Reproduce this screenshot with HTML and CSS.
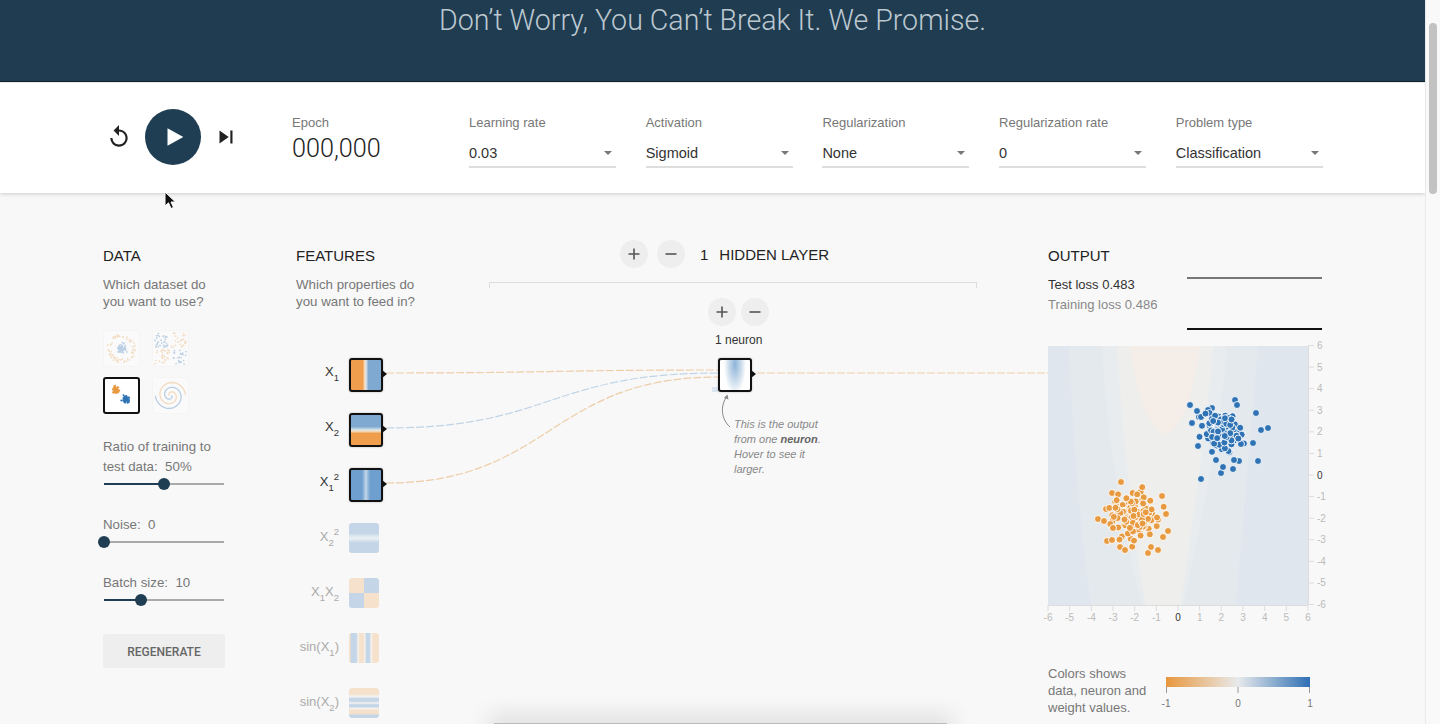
FILE: index.html
```html
<!DOCTYPE html>
<html lang="en">
<head>
<meta charset="utf-8">
<title>Neural Network Playground</title>
<link rel="stylesheet" href="styles.css">
</head>
<body>
<div class="window">
  <div class="page">
    <header class="hero"><h1>Don’t Worry, You Can’t Break It. We Promise.</h1></header>

    <section class="topbar">
      <div class="transport">
        <svg class="icon-btn" viewBox="0 0 24 24"><path d="M12 5V1L7 6l5 5V7c3.31 0 6 2.69 6 6s-2.69 6-6 6-6-2.69-6-6H4c0 4.42 3.58 8 8 8s8-3.58 8-8-3.58-8-8-8z"/></svg>
        <div class="play"><svg viewBox="0 0 24 24"><path d="M3 1.5 L22 12 L3 22.5 Z"/></svg></div>
        <svg class="icon-btn" viewBox="0 0 24 24"><path d="M6 18l8.5-6L6 6v12zM16 6v12h2V6h-2z"/></svg>
      </div>
      <div class="epoch">
        <div class="ctl-label">Epoch</div>
        <div class="epoch-value">000,000</div>
      </div>
      <div class="selects">
        <div class="select"><div class="ctl-label">Learning rate</div><div class="ctl-value"><span>0.03</span><i class="caret"></i></div></div>
        <div class="select"><div class="ctl-label">Activation</div><div class="ctl-value"><span>Sigmoid</span><i class="caret"></i></div></div>
        <div class="select"><div class="ctl-label">Regularization</div><div class="ctl-value"><span>None</span><i class="caret"></i></div></div>
        <div class="select"><div class="ctl-label">Regularization rate</div><div class="ctl-value"><span>0</span><i class="caret"></i></div></div>
        <div class="select"><div class="ctl-label">Problem type</div><div class="ctl-value"><span>Classification</span><i class="caret"></i></div></div>
      </div>
    </section>

    <main class="main">
      <svg class="links" viewBox="0 193 1425 531">
        <path class="link orange" d="M386 373 C 550 373, 550 370, 718 370"/>
        <path class="link blue" d="M386 428 C 550 428, 550 373, 718 373"/>
        <path class="link orange" d="M386 483 C 550 483, 550 377, 718 377"/>
        <path class="link orange" d="M757 373 H 1048"/>
      </svg>

      <section class="col col-data">
        <h4>DATA</h4>
        <p class="desc">Which dataset do<br>you want to use?</p>
        <div class="datasets">
          <div class="dataset"><svg id="ds-circle" viewBox="0 0 37 37"></svg></div>
          <div class="dataset"><svg id="ds-xor" viewBox="0 0 37 37"></svg></div>
          <div class="dataset selected"><svg id="ds-gauss" viewBox="0 0 37 37"></svg></div>
          <div class="dataset"><svg id="ds-spiral" viewBox="0 0 37 37"></svg></div>
        </div>
        <div class="slider-label first">Ratio of training to<br>test data:&nbsp; 50%</div>
        <div class="slider"><div class="fill" style="width:50%"></div><div class="knob" style="left:50%"></div></div>
        <div class="slider-label">Noise:&nbsp; 0</div>
        <div class="slider"><div class="fill" style="width:0"></div><div class="knob" style="left:0"></div></div>
        <div class="slider-label">Batch size:&nbsp; 10</div>
        <div class="slider"><div class="fill" style="width:31%"></div><div class="knob" style="left:31%"></div></div>
        <button class="regen">REGENERATE</button>
      </section>

      <section class="col col-features">
        <h4>FEATURES</h4>
        <p class="desc">Which properties do<br>you want to feed in?</p>
        <div class="features">
          <div class="feature on"><span class="f-label">X<sub>1</sub></span><div class="thumb t-x1"></div></div>
          <div class="feature on"><span class="f-label">X<sub>2</sub></span><div class="thumb t-x2"></div></div>
          <div class="feature on"><span class="f-label">X<sub>1</sub><sup>2</sup></span><div class="thumb t-x1sq"></div></div>
          <div class="feature"><span class="f-label">X<sub>2</sub><sup>2</sup></span><div class="thumb t-x2sq"></div></div>
          <div class="feature"><span class="f-label">X<sub>1</sub>X<sub>2</sub></span><div class="thumb t-x1x2"></div></div>
          <div class="feature"><span class="f-label">sin(X<sub>1</sub>)</span><div class="thumb t-sin1"></div></div>
          <div class="feature"><span class="f-label">sin(X<sub>2</sub>)</span><div class="thumb t-sin2"></div></div>
        </div>
      </section>

      <section class="col col-network">
        <div class="net-head">
          <button class="round"><svg viewBox="0 0 14 14"><path d="M7 1.500V12.500M1.500 7H12.500"/></svg></button>
          <button class="round"><svg viewBox="0 0 14 14"><path d="M1.500 7H12.500"/></svg></button>
          <span class="net-count">1</span>
          <span class="net-title">HIDDEN LAYER</span>
        </div>
        <div class="bracket"></div>
        <div class="layer-btns">
          <button class="round"><svg viewBox="0 0 14 14"><path d="M7 1.500V12.500M1.500 7H12.500"/></svg></button>
          <button class="round"><svg viewBox="0 0 14 14"><path d="M1.500 7H12.500"/></svg></button>
        </div>
        <div class="neuron-count">1 neuron</div>
        <div class="neuron">
          <i class="weight-mark"></i>
          <div class="neuron-box"></div>
          <div class="callout">
            <svg class="callout-arrow" viewBox="0 0 16 34"><path d="M12 33 C 3 25, 2 12, 9 2"/><path class="tip" d="M9.500 0.500 L10.500 5.500 L6 3.800 Z"/></svg>
            <p>This is the output<br>from one <b>neuron</b>.<br>Hover to see it<br>larger.</p>
          </div>
        </div>
      </section>

      <section class="col col-output">
        <h4>OUTPUT</h4>
        <div class="loss-row">
          <div class="loss">
            <div class="loss-test">Test loss 0.483</div>
            <div class="loss-train">Training loss 0.486</div>
          </div>
          <div class="spark"></div>
        </div>
        <svg id="heatmap" class="heatmap" viewBox="1048 346 290 290">
          <rect x="1048" y="346" width="260" height="259" fill="#dfe6ee"/>
          <path fill="#e4e9ee" d="M1069 346 C1072 420 1080 530 1091 605 H1236 C1242 530 1252 420 1258 346 Z"/>
          <path fill="#e9ecef" d="M1102 346 C1106 420 1120 530 1143 605 H1183 C1200 530 1222 420 1227 346 Z"/>
          <path fill="#eeeeed" d="M1117 346 C1122 420 1132 530 1146 605 H1181 C1192 520 1208 420 1213 346 Z"/>
          <path fill="#f4ede8" d="M1130 346 C1134 385 1145 425 1165 436 C1185 425 1196 385 1200 346 Z"/>
          <g id="hm-dots"></g>
          <g id="hm-axes"></g>
        </svg>
        <div class="legend">
          <div class="legend-text">Colors shows<br>data, neuron and<br>weight values.</div>
          <svg class="legend-bar" viewBox="0 0 150 42">
            <defs><linearGradient id="lg"><stop offset="0" stop-color="#e8973d"/><stop offset=".5" stop-color="#e8eaeb"/><stop offset="1" stop-color="#2e6fb4"/></linearGradient></defs>
            <rect x="2" y="0" width="144" height="10" fill="url(#lg)"/>
            <path class="legend-tick" d="M2.500 10v6M74 10v6M145.500 10v6"/>
            <text x="2" y="30">-1</text><text x="74" y="30">0</text><text x="146" y="30">1</text>
          </svg>
        </div>
      </section>

      <svg class="cursor" viewBox="0 0 14 20"><path d="M1 1 L1 15 L4.500 11.800 L7 17.500 L9.500 16.400 L7 11 L11.500 11 Z"/></svg>
    </main>
    <div class="next-card"></div>
  </div>
  <div class="scrollbar"><div class="scroll-thumb"></div></div>
</div>
<script src="script.js"></script>
</body>
</html>
```

FILE: styles.css
```css
* { box-sizing: border-box; }
html, body { margin: 0; height: 100%; overflow: hidden; }
body { font-family: "Liberation Sans", Arial, sans-serif; color: #333; background: #f8f8f8; }
.window { display: flex; width: 1440px; height: 724px; overflow: hidden; }
.page { width: 1425px; height: 724px; overflow: hidden; display: flex; flex-direction: column; flex: none; }
.scrollbar { flex: 1; background: #f9f9f9; border-left: 1px solid #e9e9e9; padding: 23px 3px 0 3px; }
.scroll-thumb { width: 8px; height: 171px; background: #c2c2c2; border-radius: 4px; }

.hero { height: 82px; flex: none; background: #1f3c50; border-bottom: 1px solid #14252f; text-align: center; }
.hero h1 { margin: 0; padding-top: 1px; font: 300 28.600px/38px Roboto, sans-serif; color: #bcc8d0; }

.topbar { height: 111px; flex: none; background: #fff; display: flex; box-shadow: 0 1px 4px rgba(0,0,0,.18); position: relative; z-index: 2; border-top: 1px solid #e4e7e9; }
.transport { display: flex; align-items: center; gap: 12px; padding: 0 0 0 106px; height: 107px; width: 292px; }
.icon-btn { width: 26px; height: 26px; fill: #222; flex: none; }
.icon-btn:first-child { margin-right: 1px; }
.play { width: 56px; height: 56px; border-radius: 50%; background: #1f3e53; flex: none; display: flex; align-items: center; justify-content: center; padding-left: 3px; }
.play svg { width: 20px; height: 22px; fill: #fff; }
.epoch { width: 177px; flex: none; }
.ctl-label { font-size: 13px; line-height: 16px; color: #777; margin-top: 32px; }
.epoch-value { font: 300 25.200px/30px Roboto, sans-serif; color: #222; margin-top: 3px; }
.selects { display: flex; gap: 29.700px; }
.select { width: 147px; }
.ctl-value { display: flex; align-items: center; justify-content: space-between; height: 32px; margin-top: 5px; padding: 3px 4px 0 0; border-bottom: 2px solid #ddd; font-size: 14.500px; color: #333; }
.caret { width: 0; height: 0; border-left: 4.500px solid transparent; border-right: 4.500px solid transparent; border-top: 4.500px solid #777; }

.main { position: relative; height: 530px; flex: none; padding: 47px 0 0 103px; display: grid; grid-template-columns: 193px 193px 488px 277px; column-gap: 0; align-items: start; background: #f8f8f8; }
.col h4 { margin: 8px 0 0; font-size: 15px; line-height: 16px; font-weight: 400; color: #222; }
.desc { margin: 12px 0 0; font-size: 13.300px; line-height: 17px; color: #777; }
.col-output { margin-left: 71px; }

.datasets { display: grid; grid-template-columns: 37px 37px; gap: 10px 12px; margin-top: 20px; }
.dataset { width: 37px; height: 37px; border-radius: 3px; border: 1px solid #f0f0f0; opacity: .3; background: #fff; overflow: hidden; }
.dataset svg { display: block; width: 100%; height: 100%; }
.dataset.selected { opacity: 1; border: 2.500px solid #111; }
.slider-label { margin: 22px 0 -1px; padding-top: 1px; font-size: 13.300px; line-height: 20px; color: #777; }
.slider { position: relative; width: 120px; height: 16px; margin-left: 1px; background: linear-gradient(#aaa,#aaa) center/100% 2px no-repeat; }
.fill { position: absolute; left: 0; top: 7px; height: 2px; background: #1f3e53; }
.knob { position: absolute; top: 2px; width: 12px; height: 12px; margin-left: -6px; border-radius: 50%; background: #1f3e53; }
.regen { display: block; width: 122px; height: 34px; margin-top: 26px; padding: 1px 0 0; border: 0; border-radius: 2px; background: #eee; font: 500 12px Roboto, sans-serif; color: #666; }

.features { margin-top: 48px; }
.feature { display: flex; height: 55px; gap: 10px; align-items: flex-start; color: #aaa; }
.feature.on { color: #333; }
.f-label { width: 43px; margin-top: 4px; text-align: right; font-size: 13px; line-height: 20px; white-space: nowrap; display: flex; justify-content: flex-end; flex: none; }
.f-label sub { font-size: 9.500px; line-height: 1; align-self: flex-end; }
.f-label sup { font-size: 9.500px; line-height: 1; align-self: flex-start; }
.thumb { width: 30px; height: 30px; border-radius: 3px; opacity: .42; position: relative; flex: none; }
.feature.on .thumb { width: 34px; height: 34px; opacity: 1; border: 2px solid #111; box-shadow: 0 0 2px rgba(0,0,0,.3); background-origin: border-box; }
.feature.on .thumb::after, .neuron-box::after { content: ""; position: absolute; right: -6px; top: 10px; border-left: 5px solid #111; border-top: 4.500px solid transparent; border-bottom: 4.500px solid transparent; }
.t-x1 { background: linear-gradient(90deg, #ee9e4c 0 40%, #f5d9b8 46%, #dfe6ea 50%, #80a9d2 57%); }
.t-x2 { background: linear-gradient(180deg, #80a9d2 0 40%, #dfe6ea 50%, #f5d9b8 54%, #ee9e4c 60%); }
.t-x1sq { background: linear-gradient(90deg, #6f9fce 0 38%, #9dbedd 45%, #c5d8e8 50%, #9dbedd 55%, #6f9fce 62%); }
.t-x2sq { background: linear-gradient(180deg, #7ca6d0 0 34%, #bcd2e6 44%, #d8e4ee 50%, #bcd2e6 56%, #7ca6d0 66%); }
.t-x1x2 { background: conic-gradient(#7ca6d0 0 25%, #f2c28f 25% 50%, #7ca6d0 50% 75%, #f2c28f 75%); }
.t-sin1 { background: linear-gradient(90deg, #f2c28f 0 3%, #7ca6d0 8% 24%, #f0ece5 30%, #f2c28f 36% 48%, #f0ece5 53%, #7ca6d0 58% 68%, #f0ece5 74%, #f2c28f 80%); }
.t-sin2 { background: linear-gradient(180deg, #f2c28f 0 20%, #f0ece5 28%, #7ca6d0 36% 44%, #f0ece5 50%, #7ca6d0 56% 62%, #f0ece5 68%, #f2c28f 74% 84%, #7ca6d0 92%); }

.net-head { display: flex; align-items: center; gap: 9px; padding-left: 131px; height: 28px; }
.round { width: 28px; height: 28px; padding: 0; border: 0; border-radius: 50%; background: #eee; display: flex; align-items: center; justify-content: center; }
.round svg { width: 14px; height: 14px; fill: none; stroke: #555; stroke-width: 1.600; }
.net-count { margin: 0 0 0 6px; font-size: 15px; color: #222; }
.net-title { margin: 0 0 0 2px; font-size: 15px; color: #222; }
.bracket { height: 6px; margin-top: 14px; border: 1.500px solid #ddd; border-bottom: 0; }
.layer-btns { display: flex; gap: 5px; margin: 10px 0 0 219px; }
.neuron-count { margin: 7px 0 0 226px; font-size: 12px; line-height: 14px; color: #333; }
.neuron { position: relative; margin: 11px 0 0 229px; width: 34px; }
.neuron-box { position: relative; width: 34px; height: 34px; border: 2px solid #111; border-radius: 3px; box-shadow: 0 0 2px rgba(0,0,0,.3); background: radial-gradient(ellipse 11px 30px at 50% 15%, #8db4da 0, #b9d0e6 40%, #e4edf4 78%, #fff 100%), #fff; }
.weight-mark { position: absolute; left: -6px; top: 29px; width: 6px; height: 5px; background: #dde6f0; }
.callout { position: absolute; left: 0; top: 36px; width: 110px; }
.callout-arrow { position: absolute; left: 0; top: 0; width: 16px; height: 34px; fill: none; stroke: #888; stroke-width: 1; }
.callout-arrow .tip { fill: #888; stroke: none; }
.callout p { margin: 23px 0 0 16px; font-size: 11px; line-height: 15px; font-style: italic; color: #888; }
.callout b { color: #666; }

.loss-row { display: flex; justify-content: space-between; width: 274px; margin-top: 11px; align-items: flex-start; }
.loss { font-size: 13px; line-height: 20px; }
.loss-test { color: #333; }
.loss-train { color: #888; }
.spark { width: 135px; height: 53px; margin-top: 2px; border-top: 2px solid #777; border-bottom: 2px solid #111; }
.heatmap { display: block; width: 290px; height: 290px; margin-top: 16px; overflow: visible; }
.axis-line { stroke: #ddd; stroke-width: 1; fill: none; }
.axis-text { font: 10px "Liberation Sans", sans-serif; fill: #bbb; }
.axis-text.zero { fill: #333; }
.legend { display: flex; margin-top: 29px; }
.legend-text { width: 116px; font-size: 13px; line-height: 17px; color: #777; flex: none; }
.legend-bar { width: 150px; height: 42px; margin-top: 12px; overflow: visible; }
.legend-bar text { font-size: 10px; fill: #777; text-anchor: middle; }
.legend-tick { stroke: #999; stroke-width: 1; fill: none; }

.links { position: absolute; left: 0; top: 0; width: 1425px; height: 531px; pointer-events: none; }
.link { fill: none; stroke-width: 1.200; stroke-dasharray: 8 2; }
.link.orange { stroke: #eecda8; }
.link.blue { stroke: #c0d4e6; }
.cursor { position: absolute; left: 164px; top: -2px; width: 14px; height: 20px; z-index: 3; }
.cursor path { fill: #111; stroke: #fff; stroke-width: 1; }

.next-card { margin-left: 494px; width: 453px; height: 40px; background: #bbb; box-shadow: 0 -4px 22px 6px rgba(0,0,0,.09); flex: none; position: relative; }
```

FILE: script.js
```js
(function () {
  var NS = "http://www.w3.org/2000/svg";
  var seed = 12345;
  function rnd() { seed = (seed * 16807) % 2147483647; return (seed - 1) / 2147483646; }
  function gauss() { return (rnd() + rnd() + rnd() + rnd() - 2) * 1.2; }
  function el(parent, name, attrs, text) {
    var node = document.createElementNS(NS, name);
    for (var key in attrs) node.setAttribute(key, attrs[key]);
    if (text !== undefined) node.textContent = text;
    parent.appendChild(node);
    return node;
  }
  var BLUE = "#2f73b5", ORANGE = "#e89a41";

  function mainDots(group, color, fixed, cx, cy, sx, sy, count) {
    var pts = fixed.slice();
    for (var i = 0; i < count; i++) {
      pts.push([cx + gauss() * sx, cy + gauss() * sy]);
    }
    pts.forEach(function (p) {
      el(group, "circle", { cx: p[0], cy: p[1], r: 3.5, fill: color, stroke: "#fff", "stroke-width": 0.9 });
    });
  }
  var dots = document.getElementById("hm-dots");
  mainDots(dots, BLUE, [[1190,405],[1212,408],[1235,400],[1237,405],[1256,413],[1268,428],[1261,430],[1253,443],[1258,461],[1201,479],[1221,473],[1233,469],[1223,467],[1239,461],[1234,460],[1216,460],[1198,446],[1192,423],[1199,417],[1208,410],[1197,411]], 1221, 433, 15, 14, 100);
  mainDots(dots, ORANGE, [[1121,482],[1112,493],[1162,496],[1098,519],[1104,521],[1166,514],[1168,531],[1163,537],[1107,541],[1112,540],[1120,547],[1125,550],[1148,553],[1158,550],[1151,547],[1106,509]], 1134, 515, 15, 17, 105);

  var axes = document.getElementById("hm-axes");
  for (var v = -6; v <= 6; v++) {
    var x = 1048 + (v + 6) * 21.667, y = 475 - v * 21.583;
    var zero = v === 0 ? " zero" : "";
    el(axes, "path", { "class": "axis-line", d: "M" + x + " 605v6" });
    el(axes, "text", { "class": "axis-text" + zero, x: x, y: 621, "text-anchor": "middle" }, String(v));
    el(axes, "path", { "class": "axis-line", d: "M1308 " + y + "h6" });
    el(axes, "text", { "class": "axis-text" + zero, x: 1317, y: y + 3.5 }, String(v));
  }
  el(axes, "path", { "class": "axis-line", d: "M1048 605.500H1308M1308.500 346V605" });

  function small(svg, x, y, color, r) { el(svg, "circle", { cx: x, cy: y, r: r || 0.9, fill: color }); }

  var circle = document.getElementById("ds-circle");
  for (var i = 0; i < 60; i++) {
    var a = rnd() * 6.283, rad = 11 + rnd() * 4;
    small(circle, 18.5 + Math.cos(a) * rad, 18.5 + Math.sin(a) * rad, ORANGE);
    small(circle, 18.5 + gauss() * 3.4, 18.5 + gauss() * 3.4, BLUE);
  }
  var xor = document.getElementById("ds-xor");
  for (i = 0; i < 120; i++) {
    var px = 2 + rnd() * 33, py = 2 + rnd() * 33;
    if (Math.abs(px - 18.5) < 1 || Math.abs(py - 18.5) < 1) continue;
    small(xor, px, py, (px - 18.5) * (py - 18.5) > 0 ? BLUE : ORANGE);
  }
  var g = document.getElementById("ds-gauss");
  for (i = 0; i < 55; i++) {
    small(g, 12 + gauss() * 2.4, 12 + gauss() * 2.8, ORANGE, 1.1);
    small(g, 23.5 + gauss() * 2.6, 23 + gauss() * 2.6, BLUE, 1.1);
  }
  var sp = document.getElementById("ds-spiral");
  [[0, BLUE], [3.1416, ORANGE]].forEach(function (arm) {
    var d = "";
    for (var t = 0; t <= 9.5; t += 0.2) {
      var r = t * 1.6 + 1;
      d += (d ? "L" : "M") + (18.5 + Math.cos(t + arm[0]) * r).toFixed(1) + " " + (18.5 + Math.sin(t + arm[0]) * r).toFixed(1);
    }
    el(sp, "path", { d: d, fill: "none", stroke: arm[1], "stroke-width": 1.4 });
  });
})();
```
